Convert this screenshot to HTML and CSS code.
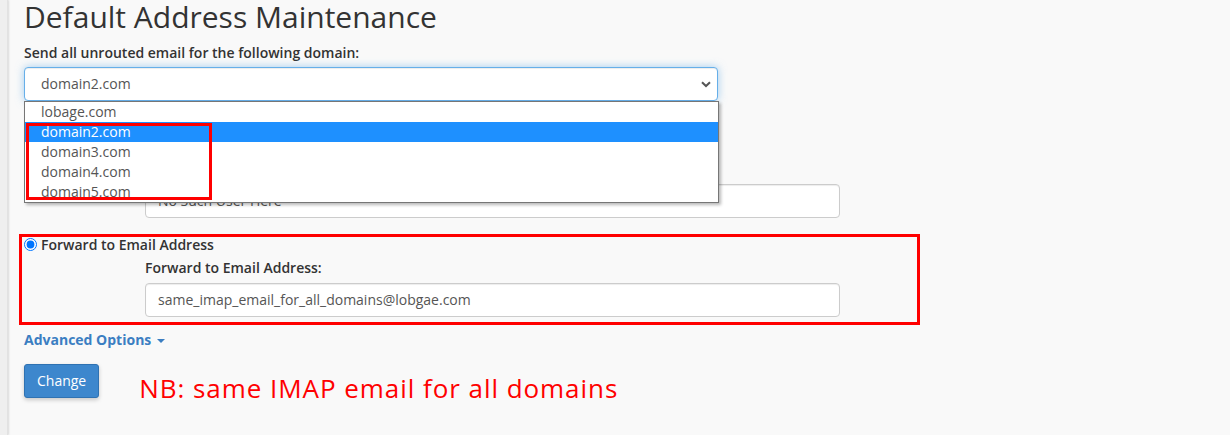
FILE: index.html
```html
<!DOCTYPE html>
<html lang="en">
<head>
<meta charset="utf-8">
<title>Default Address Maintenance</title>
<link rel="stylesheet" href="styles.css">
</head>
<body>
<div class="page">
  <aside class="rail"></aside>
  <main class="content">
    <h1 class="title">Default Address Maintenance</h1>
    <label class="field-label">Send all unrouted email for the following domain:</label>
    <div class="select-wrap">
      <div class="select">
        <span class="select-value">domain2.com</span>
        <svg class="chevron" width="10" height="7" viewBox="0 0 10 7"><path d="M1 1.2 L5 5 L9 1.2" fill="none" stroke="#555" stroke-width="2"/></svg>
      </div>
      <ul class="dropdown">
        <li class="item">lobage.com</li>
        <li class="item selected">domain2.com</li>
        <li class="item">domain3.com</li>
        <li class="item">domain4.com</li>
        <li class="item">domain5.com</li>
      </ul>
    </div>

    <div class="option option-hidden">
      <input type="radio" name="mode" class="radio">
      <span class="option-text">Discard with error to sender (at SMTP time)</span>
    </div>
    <div class="sub sub-first">
      <label class="field-label sub-label">Failure Message (seen by sender):</label>
      <div class="input">No Such User Here</div>
    </div>

    <div class="option option-forward">
      <input type="radio" name="mode" class="radio" checked>
      <span class="option-text">Forward to Email Address</span>
    </div>
    <div class="sub sub-second">
      <label class="field-label sub-label">Forward to Email Address:</label>
      <div class="input">same_imap_email_for_all_domains@lobgae.com</div>
    </div>

    <a class="advanced">Advanced Options <span class="caret"></span></a>

    <div class="actions">
      <button class="btn">Change</button>
      <span class="note">NB: same IMAP email for all domains</span>
    </div>

    <div class="mark mark-list"></div>
    <div class="mark mark-forward"></div>
  </main>
</div>
</body>
</html>
```

FILE: styles.css
```css
* { box-sizing: border-box; }

html, body {
  margin: 0;
  padding: 0;
  height: 100%;
}

body {
  background: #f9f9f9;
  font-family: "Open Sans", "Liberation Sans", sans-serif;
  color: #333;
  font-size: 14px;
  line-height: 20px;
  overflow: hidden;
}

.page {
  display: flex;
  min-height: 435px;
}

.rail {
  width: 8px;
  flex: none;
  background: #efefef;
  box-shadow: 1px 0 2px rgba(0, 0, 0, 0.12);
  border-right: 1px solid #e2e2e2;
}

.content {
  position: relative;
  flex: 1;
  padding-left: 16px;
}

.title {
  margin: 0;
  font-size: 30px;
  line-height: 33px;
  font-weight: 400;
  color: #333;
}

.field-label {
  display: block;
  margin: 10px 0 4px;
  font-weight: 600;
  color: #333;
}

.select-wrap {
  position: relative;
  width: 694px;
}

.select {
  height: 34px;
  display: flex;
  align-items: center;
  justify-content: space-between;
  padding: 0 6px 0 16px;
  background: #fff;
  border: 1px solid #66afe9;
  border-radius: 4px;
  box-shadow: inset 0 1px 1px rgba(0, 0, 0, 0.075), 0 0 8px rgba(102, 175, 233, 0.6);
  color: #555;
}

.chevron { display: block; }

.dropdown {
  position: absolute;
  left: 0;
  top: 34px;
  width: 695px;
  margin: 0;
  padding: 0;
  list-style: none;
  background: #fff;
  border: 1px solid #767676;
  box-shadow: 2px 2px 3px rgba(0, 0, 0, 0.28);
  z-index: 5;
}

.item {
  height: 20px;
  line-height: 20px;
  padding-left: 16px;
  color: #555;
}

.item.selected {
  background: #1e90ff;
  color: #fff;
}

.option {
  display: flex;
  align-items: center;
  gap: 4px;
  height: 20px;
}

.option-text {
  font-weight: 600;
}

.option-hidden { margin-top: 36px; }
.option-forward { margin-top: 17px; }

.radio {
  margin: 0 0 2px 0;
  width: 13px;
  height: 13px;
}

.sub {
  padding-left: 121px;
}

.sub-first .sub-label { margin: 3px 0 4px; }
.sub-second .sub-label { margin: 3px 0 5px; }

.input {
  width: 695px;
  height: 34px;
  padding: 6px 12px;
  background: #fff;
  border: 1px solid #ccc;
  border-radius: 4px;
  box-shadow: inset 0 1px 1px rgba(0, 0, 0, 0.075);
  color: #555;
}

.advanced {
  display: inline-block;
  margin-top: 13px;
  font-weight: 700;
  color: #3b7ec2;
  cursor: pointer;
}

.caret {
  display: inline-block;
  width: 0;
  height: 0;
  margin-left: 2px;
  vertical-align: middle;
  border-top: 4px solid #3b7ec2;
  border-left: 4px solid transparent;
  border-right: 4px solid transparent;
}

.actions {
  display: flex;
  align-items: flex-start;
  margin-top: 14px;
}

.btn {
  height: 34px;
  padding: 6px 12px;
  font-family: inherit;
  font-size: 14px;
  line-height: 20px;
  color: #fff;
  background: #3d87cd;
  border: 1px solid #2f72b2;
  border-radius: 3px;
  box-shadow: 0 2px 4px rgba(0, 0, 0, 0.2);
}

.note {
  margin: 7px 0 0 40px;
  font-size: 26px;
  line-height: 34px;
  letter-spacing: 0.95px;
  color: #ff0000;
}

.mark {
  position: absolute;
  border: 3px solid #ff0000;
  z-index: 6;
}

.mark-list {
  left: 18px;
  top: 123px;
  width: 186px;
  height: 77px;
}

.mark-forward {
  left: 11px;
  top: 234px;
  width: 901px;
  height: 91px;
}
```
